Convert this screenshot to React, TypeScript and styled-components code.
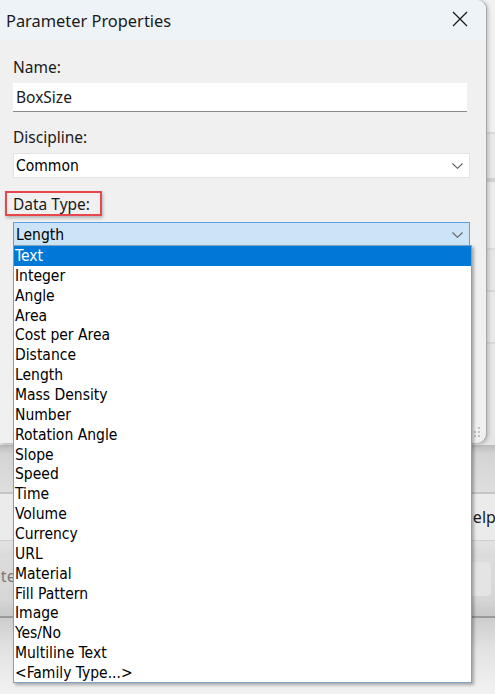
import React from 'react';
import styled, { createGlobalStyle } from 'styled-components';

const dataTypes = [
  'Text',
  'Integer',
  'Angle',
  'Area',
  'Cost per Area',
  'Distance',
  'Length',
  'Mass Density',
  'Number',
  'Rotation Angle',
  'Slope',
  'Speed',
  'Time',
  'Volume',
  'Currency',
  'URL',
  'Material',
  'Fill Pattern',
  'Image',
  'Yes/No',
  'Multiline Text',
  '<Family Type...>',
];

// bands of the application window lying behind the dialog
const bands = [
  { h: 132, bg: '#f2f2f2' },
  { h: 2, bg: '#dadada' },
  { h: 44, bg: '#e9e9e9' },
  { h: 4, bg: '#d2d2d2' },
  { h: 66, bg: '#ececec' },
  { h: 2, bg: '#dcdcdc' },
  { h: 40, bg: '#e6e6e6' },
  { h: 2, bg: '#d8d8d8' },
  { h: 50, bg: '#e9e9e9' },
  { h: 2, bg: '#d8d8d8' },
  { h: 101, bg: '#e6e6e6' },
];

const listFont = `"DejaVu Sans Condensed", "DejaVu Sans", Tahoma, sans-serif`;

const GlobalStyle = createGlobalStyle`
  html, body {
    margin: 0;
    padding: 0;
    overflow: hidden;
  }
  body {
    font-family: "Noto Sans", "Open Sans", sans-serif;
  }
`;

const Chevron = () => (
  <svg width="11" height="6" viewBox="0 0 11 6">
    <path d="M0.5 0.5 L5.5 5.3 L10.5 0.5" fill="none" stroke="#5f5f5f" strokeWidth="1.1" />
  </svg>
);

const CloseIcon = () => (
  <svg width="16" height="16" viewBox="0 0 16 16">
    <path d="M1 1 L15 15 M15 1 L1 15" stroke="#1b1b1b" strokeWidth="1.3" fill="none" />
  </svg>
);

const App = () => {
  return (
    <Desktop>
      <GlobalStyle />
      <Backdrop>
        {bands.map((b, i) => (
          <Band key={`band_${i}`} $h={b.h} $bg={b.bg} />
        ))}
        <PanelShade />
        <Divider />
        <ButtonRow>
          <GhostButton>Help</GhostButton>
        </ButtonRow>
        <LightStrip />
        <FieldRow>
          <FadedText>Delete</FadedText>
          <SoftBox />
        </FieldRow>
        <BottomFade />
        <DarkRule />
        <FooterFade />
      </Backdrop>

      <Dialog>
        <TitleBar>
          <span>Parameter Properties</span>
          <CloseButton>
            <CloseIcon />
          </CloseButton>
        </TitleBar>
        <Body>
          <Label>Name:</Label>
          <TextInput>BoxSize</TextInput>
          <Label $top={15}>Discipline:</Label>
          <Select>
            <span>Common</span>
            <Chevron />
          </Select>
          <MarkedLabel>Data Type:</MarkedLabel>
          <Select $open>
            <span>Length</span>
            <Chevron />
          </Select>
        </Body>
        <Grip>
          <svg width="12" height="12" viewBox="0 0 12 12">
            <g fill="#c2c2c2">
              <rect x="9" y="1" width="2" height="2" />
              <rect x="5" y="5" width="2" height="2" />
              <rect x="9" y="5" width="2" height="2" />
              <rect x="1" y="9" width="2" height="2" />
              <rect x="5" y="9" width="2" height="2" />
              <rect x="9" y="9" width="2" height="2" />
            </g>
          </svg>
        </Grip>
      </Dialog>

      <DropList>
        {dataTypes.map((item, index) => (
          <ListItem key={`type_${index}`} $selected={index === 0}>
            {item}
          </ListItem>
        ))}
      </DropList>
    </Desktop>
  );
};

export default App;

const Desktop = styled.div`
  position: relative;
  width: 495px;
  height: 694px;
  overflow: hidden;
  background: #ececec;
`;

const Backdrop = styled.div`
  display: flex;
  flex-direction: column;
  width: 100%;
  height: 100%;
`;

const Band = styled.div<{ $h: number; $bg: string }>`
  flex: none;
  height: ${(p) => p.$h}px;
  background: ${(p) => p.$bg};
`;

const PanelShade = styled.div`
  flex: none;
  height: 47px;
  background: linear-gradient(#bdbdbd, #d4d4d4 20%, #dedede);
`;

const Divider = styled.div`
  flex: none;
  height: 2px;
  background: #c6c6c6;
`;

const ButtonRow = styled.div`
  flex: none;
  height: 46px;
  background: #ebebeb;
  display: flex;
  align-items: center;
  justify-content: flex-end;
`;

const GhostButton = styled.div`
  width: 60px;
  padding-left: 10px;
  font-size: 16px;
  color: #1a1a1a;
  margin-right: -26px;
`;

const LightStrip = styled.div`
  flex: none;
  height: 16px;
  background: linear-gradient(#e2e2e2, #dadada);
  border-top: 1px solid #cfcfcf;
`;

const FieldRow = styled.div`
  flex: none;
  height: 44px;
  background: linear-gradient(#dcdcdc, #d6d6d6);
  display: flex;
  align-items: center;
  justify-content: space-between;
`;

const FadedText = styled.div`
  font-size: 16px;
  color: #7a7a7a;
  margin-left: -33px;
  margin-top: -6px;
`;

const SoftBox = styled.div`
  width: 24px;
  height: 34px;
  margin-right: 4px;
  border-radius: 4px;
  background: #e4e4e4;
`;

const BottomFade = styled.div`
  flex: none;
  height: 15px;
  background: linear-gradient(#d4d4d4, #c8c8c8);
`;

const DarkRule = styled.div`
  flex: none;
  height: 2px;
  background: #9a9a9a;
`;

const FooterFade = styled.div`
  flex: 1;
  background: linear-gradient(#cdcdcd, #e2e2e2 40%, #f2f2f2);
`;

const Dialog = styled.div`
  position: absolute;
  left: 0;
  top: 0;
  width: 486px;
  height: 443px;
  background: #f0f0f0;
  border-radius: 0 9px 9px 0;
  box-shadow: 1px 0 0 #a9a9a9, 2px 1px 4px rgba(0, 0, 0, 0.25);
  overflow: hidden;
  display: flex;
  flex-direction: column;
`;

const TitleBar = styled.div`
  flex: none;
  height: 40px;
  background: #eef3f8;
  display: flex;
  align-items: center;
  justify-content: space-between;
  padding: 0 18px 0 6px;
  font-size: 16.4px;
  color: #1a1a1a;
`;

const CloseButton = styled.div`
  display: flex;
  align-items: center;
  margin-top: -2px;
`;

const Body = styled.div`
  flex: 1;
  display: flex;
  flex-direction: column;
  align-items: flex-start;
  padding: 17px 17px 0 13px;
  font-size: 15.5px;
  color: #1a1a1a;
`;

const Label = styled.div<{ $top?: number }>`
  line-height: 20px;
  margin-top: ${(p) => p.$top ?? 0}px;
  margin-bottom: 6px;
`;

const MarkedLabel = styled.div`
  line-height: 20px;
  margin: 13px 0 6px -8px;
  padding: 1px 10px 0 6px;
  border: 2px solid #e8474c;
  box-shadow: 1px 2px 3px rgba(0, 0, 0, 0.25);
`;

const TextInput = styled.div`
  box-sizing: border-box;
  width: 454px;
  height: 29px;
  padding: 0 3px;
  display: flex;
  align-items: center;
  background: #ffffff;
  border-bottom: 1px solid #8a8a8a;
`;

const Select = styled.div<{ $open?: boolean }>`
  box-sizing: border-box;
  width: 457px;
  height: 25px;
  padding: 1px 6px 0 2px;
  display: flex;
  align-items: center;
  justify-content: space-between;
  background: ${(p) => (p.$open ? '#cce4f7' : '#ffffff')};
  border: 1px solid ${(p) => (p.$open ? '#5a9fe0' : '#e3e3e3')};
  font-family: ${listFont};
  font-size: 15.5px;
  color: #000000;
`;

const Grip = styled.div`
  position: absolute;
  right: 5px;
  bottom: 5px;
  line-height: 0;
`;

const DropList = styled.ul`
  position: absolute;
  left: 13px;
  top: 245px;
  box-sizing: border-box;
  width: 459px;
  height: 438px;
  margin: 0;
  padding: 0;
  list-style: none;
  background: #ffffff;
  border: 1px solid #7fa2c4;
  box-shadow: 2px 2px 3px rgba(0, 0, 0, 0.3);
  font-family: ${listFont};
  font-size: 15.5px;
  color: #000000;
`;

const ListItem = styled.li<{ $selected?: boolean }>`
  height: 18.86px;
  padding-top: 1px;
  line-height: 18.86px;
  padding-left: 1px;
  white-space: nowrap;
  background: ${(p) => (p.$selected ? '#0078d7' : 'transparent')};
  color: ${(p) => (p.$selected ? '#ffffff' : '#000000')};
`;
